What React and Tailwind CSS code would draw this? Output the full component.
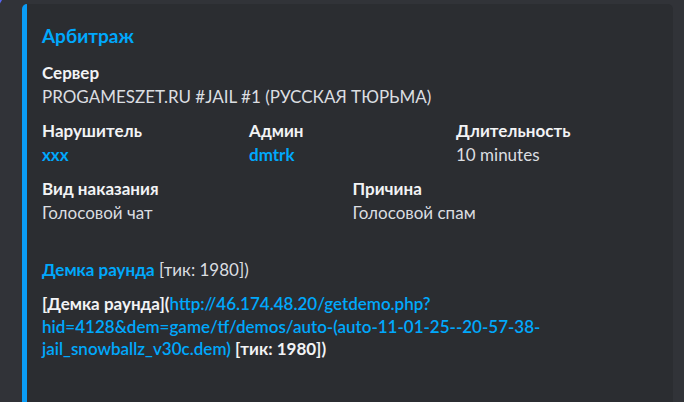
import React from "react";

function Field({ name, children, span }) {
  return (
    <div className={span}>
      <div className="text-[17px] leading-[24px] font-bold text-[#f2f3f5]">{name}</div>
      <div className="text-[17px] leading-[24px] text-[#dbdee1]">{children}</div>
    </div>
  );
}

export default function App() {
  return (
    <div className="relative h-[402px] overflow-hidden bg-[#313338] font-['Lato',sans-serif]">
      <div className="absolute -left-[38px] -top-[30px] h-[42px] w-[42px] rounded-full bg-[#5865f2]" />
      <div className="pl-[22px] pt-[4px] w-[673px]">
        <div className="rounded-[5px] border-l-[5px] border-[#0a9cf5] bg-[#2b2d31] pt-[10px] pr-[20px] pl-[15px] pb-[80px]">
          <div className="mt-[9px] text-[19px] leading-[26px] font-bold text-[#00a8fc]">Арбитраж</div>
          <div className="mt-[12px] grid grid-cols-12 gap-x-[10px] gap-y-[10px]">
            <Field name="Сервер" span="col-span-12">PROGAMESZET.RU #JAIL #1 (РУССКАЯ ТЮРЬМА)</Field>
            <Field name="Нарушитель" span="col-span-4">
              <span className="font-bold text-[#00a8fc]">xxx</span>
            </Field>
            <Field name="Админ" span="col-span-4">
              <span className="font-bold text-[#00a8fc]">dmtrk</span>
            </Field>
            <Field name="Длительность" span="col-span-4">10 minutes</Field>
            <Field name="Вид наказания" span="col-span-6">Голосовой чат</Field>
            <Field name="Причина" span="col-span-6">Голосовой спам</Field>
          </div>
          <div className="mt-[33px] text-[17px] leading-[24px] text-[#dbdee1]">
            <span className="font-bold text-[#00a8fc]">Демка раунда</span> [тик: 1980])
          </div>
          <div className="mt-[11px] text-[17px] leading-[22.5px] font-bold text-[#f2f3f5] whitespace-nowrap">
            <div>
              [Демка раунда](<span className="font-semibold text-[#00a8fc]">http://46.174.48.20/getdemo.php?</span>
            </div>
            <div className="font-semibold text-[#00a8fc]">hid=4128&amp;dem=game/tf/demos/auto-(auto-11-01-25--20-57-38-</div>
            <div>
              <span className="font-semibold text-[#00a8fc]">jail_snowballz_v30c.dem)</span> [тик: 1980])
            </div>
          </div>
        </div>
      </div>
    </div>
  );
}
